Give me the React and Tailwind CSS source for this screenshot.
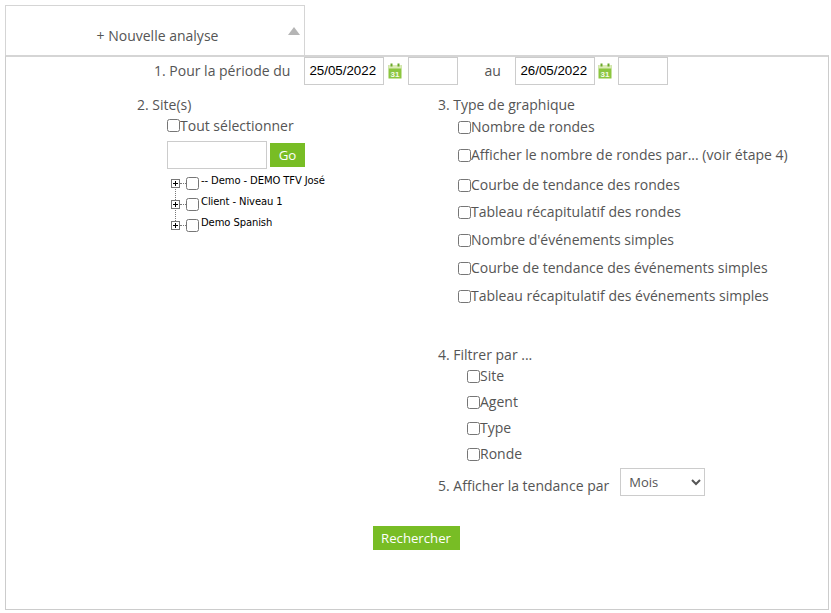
const CalendarIcon = () => (
  <svg width="14" height="16" viewBox="0 0 14 16" className="shrink-0">
    <rect x="0.5" y="2" width="13" height="13.5" fill="#8cc63f" />
    <rect x="0.5" y="2" width="13" height="3.5" fill="#dcebb8" />
    <rect x="2.5" y="0.5" width="2" height="3" fill="#6aa82a" />
    <rect x="9.5" y="0.5" width="2" height="3" fill="#6aa82a" />
    <text x="7" y="13.5" textAnchor="middle" fontSize="8" fontWeight="700" fontFamily="'Liberation Sans', sans-serif" fill="#f4f9e8">31</text>
  </svg>
);

const Check = ({ label, className = "", textClass = "" }) => (
  <label className={`flex items-center h-[20px] ${className}`}>
    <input type="checkbox" className="m-0 w-[13px] h-[13px]" />
    <span className={textClass}>{label}</span>
  </label>
);

const TreeRow = ({ label, last }) => (
  <div className="relative flex items-start h-[21px]">
    {!last && <span className="absolute left-[3.5px] top-[9px] h-[21px] border-l border-dotted border-[#777]"></span>}
    <span className="relative z-10 mt-[5px] flex items-center justify-center w-[9px] h-[9px] border border-[#777] bg-white text-black">
      <span className="absolute w-[5px] h-px bg-black"></span>
      <span className="absolute w-px h-[5px] bg-black"></span>
    </span>
    <span className="mt-[9px] w-[6px] border-t border-dotted border-[#777]"></span>
    <input type="checkbox" className="m-0 mt-[3px] w-[13px] h-[13px]" />
    <span className="ml-[2px] text-[10px] leading-[14px] tracking-[-0.1px] text-black font-['DejaVu_Sans',sans-serif]">{label}</span>
  </div>
);

const DateInput = ({ value }) => (
  <input
    type="text"
    defaultValue={value}
    className="w-[80px] h-[28px] border border-[#ccc] px-[4px] pb-[2px] text-[13.33px] text-black font-['Liberation_Sans',sans-serif] outline-none"
  />
);

const BlankInput = ({ className = "" }) => (
  <input type="text" className={`h-[28px] border border-[#ccc] outline-none ${className}`} />
);

export default function App() {
  return (
    <div className="w-[831px] h-[613px] bg-white text-[14px] leading-[20px] text-[#555] font-['Open_Sans',sans-serif] overflow-hidden">
      <div className="pt-[5px] pl-[5px] pr-[2px]">
        <div className="relative w-[300px] h-[50px] border border-b-0 border-[#d5d5d5] pt-[20px] pl-[5px] text-center">
          + Nouvelle analyse
          <span className="absolute right-[4px] top-[21px] w-0 h-0 border-x-[6px] border-b-[8px] border-x-transparent border-b-[#b5b5b5]"></span>
        </div>
        <div className="w-[824px] h-[555px] border border-[#ccc] border-t-2 border-t-[#d5d5d5]">
          <div className="flex items-center h-[28px] ml-[148px]">
            <span>1. Pour la période du</span>
            <div className="ml-[14px] flex items-center">
              <DateInput value="25/05/2022" />
              <div className="mx-[4px]"><CalendarIcon /></div>
              <BlankInput className="w-[50px] ml-[2px]" />
            </div>
            <span className="ml-[26px] w-[31px]">au</span>
            <div className="flex items-center">
              <DateInput value="26/05/2022" />
              <div className="ml-[3px] mr-[4px]"><CalendarIcon /></div>
              <BlankInput className="w-[50px] ml-[2px]" />
            </div>
          </div>

          <div className="flex mt-[10px]">
            <div className="ml-[131px] w-[300px]">
              <div>2. Site(s)</div>
              <div className="ml-[30px]">
                <Check label="Tout sélectionner" className="pt-[1px]" />
                <div className="flex items-center mt-[6px]">
                  <input type="text" className="w-[100px] h-[28px] border border-[#ccc] outline-none" />
                  <button className="ml-[3px] w-[35px] h-[24px] bg-[#78bd25] text-white text-[13.33px]">Go</button>
                </div>
                <div className="mt-[5px] ml-[4px]">
                  <TreeRow label="-- Demo - DEMO TFV José" />
                  <TreeRow label="Client - Niveau 1" />
                  <TreeRow label="Demo Spanish" last />
                </div>
              </div>
            </div>

            <div className="flex-1">
              <div className="pl-[1px]">3. Type de graphique</div>
              <div className="ml-[21px]">
                <Check label="Nombre de rondes" className="mt-[2px]" />
                <Check label="Afficher le nombre de rondes par... (voir étape 4)" className="mt-[8px]" />
                <Check label="Courbe de tendance des rondes" className="mt-[10px]" />
                <Check label="Tableau récapitulatif des rondes" className="mt-[7px]" />
                <Check label="Nombre d'événements simples" className="mt-[8px]" />
                <Check label="Courbe de tendance des événements simples" className="mt-[8px]" />
                <Check label="Tableau récapitulatif des événements simples" className="mt-[8px]" />
              </div>
              <div className="mt-[39px] pl-[1px]">4. Filtrer par ...</div>
              <div className="ml-[30px]">
                <Check label="Site" className="mt-[1px]" />
                <Check label="Agent" className="mt-[6px]" />
                <Check label="Type" className="mt-[6px]" />
                <Check label="Ronde" className="mt-[6px]" />
              </div>
              <div className="flex items-start mt-[4px] h-[28px] pl-[1px]">
                <span className="mt-[8px]">5. Afficher la tendance par</span>
                <select defaultValue="Mois" className="ml-[11px] w-[85px] h-[28px] border border-[#ccc] bg-white pl-[4px] text-[13px] text-[#555] outline-none">
                  <option>Mois</option>
                  <option>Semaine</option>
                  <option>Jour</option>
                </select>
              </div>
            </div>
          </div>

          <div className="flex justify-center mt-[30px] pr-[2px]">
            <button className="w-[87px] h-[24px] bg-[#78bd25] text-white text-[13.2px]">Rechercher</button>
          </div>
        </div>
      </div>
    </div>
  );
}
